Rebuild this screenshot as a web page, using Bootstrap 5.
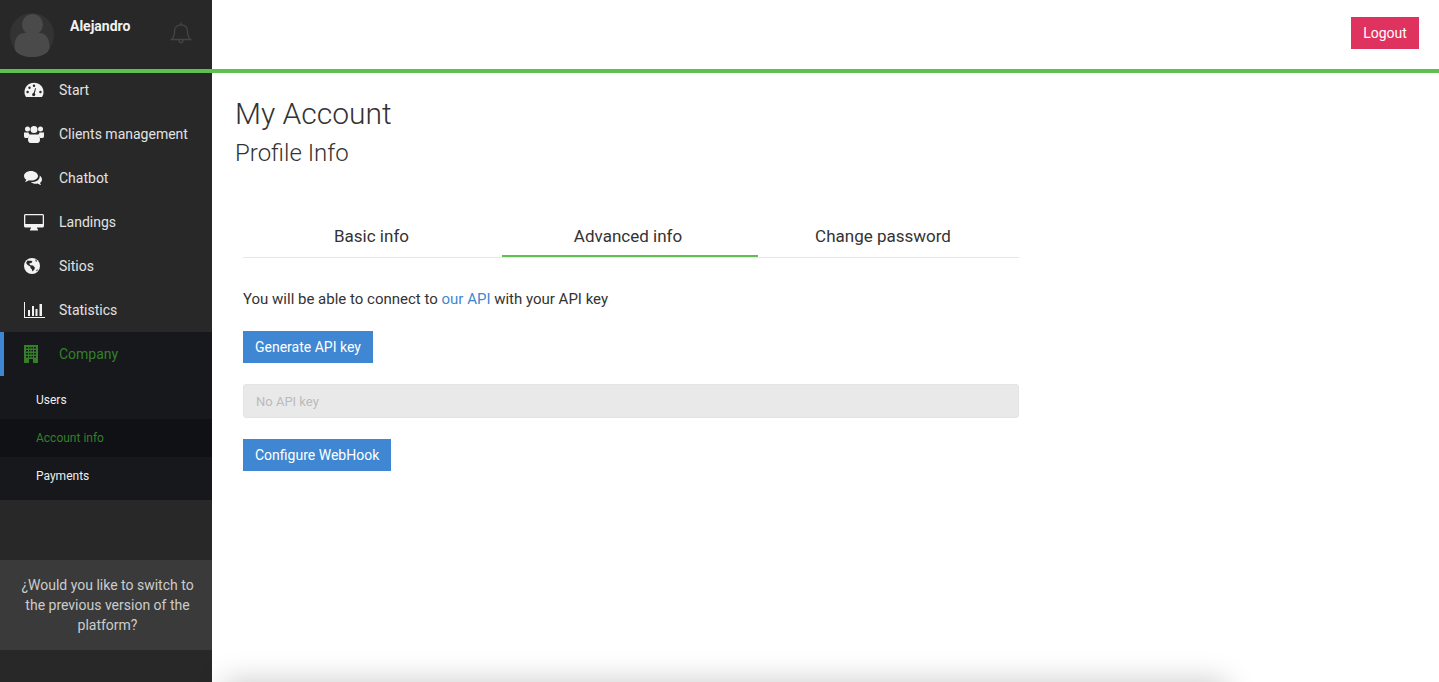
<!doctype html>
<html lang="en"><head><meta charset="utf-8"><title>My Account</title>
<link href="https://cdn.jsdelivr.net/npm/bootstrap@5.3.0/dist/css/bootstrap.min.css" rel="stylesheet">
<style>
html,body{height:100%;overflow:hidden}
body{font-family:Roboto,"Liberation Sans",sans-serif;font-size:14px;color:#333;background:#fff}
.shell{height:682px;overflow:hidden}
.side{width:212px;background:#282828;color:#eee}
.side-head{height:69px;flex:none}
.avatar{position:absolute;left:10px;top:13px}
.uname{font-size:14px;font-weight:700;color:#f2f2f2;position:absolute;left:70px;top:16px}
.bell{position:absolute;left:170px;top:21px}
.accent{height:4px;background:#60bf51;flex:none}
.menu-item{height:44px;display:flex;align-items:center;color:#e2e2e2;text-decoration:none;font-size:14px}
.menu-ico{width:59px;flex:none;padding-left:24px;display:flex}
.menu-first{margin-top:-5px}
.menu-on{background:#16181c;color:#357f2b;border-left:4px solid #3f87d2}
.menu-on .menu-ico{width:55px;padding-left:20px}
.sub-box{background:#16181c;padding-top:5px;padding-bottom:5px}
.sub-item{height:38px;display:flex;align-items:center;padding-left:36px;font-size:12px;color:#eee;text-decoration:none}
.sub-on{background:#0f1114;color:#357f2b}
.switch-box{background:#3a3a3a;color:#ccc;height:90px;margin-top:60px;font-size:14px;line-height:20px;padding:15px 16px 15px 19px;text-align:center}
.main-col{min-width:0;position:relative}
.top-bar{height:69px;flex:none;padding-top:17px}
.logout{background:#df325f;color:#fff;border-radius:0;font-size:14px;width:68px;height:32px;padding:0;border:0}
.logout:hover{background:#df325f;color:#fff}
.content{padding:23px 23px 0}
.title{font-size:30px;font-weight:300;line-height:36px;margin:0 0 3px;color:#333}
.subtitle{font-size:24px;font-weight:300;line-height:36px;margin:0;color:#333}
.pane{width:776px;margin:39px 0 0 8px}
.tabs-row{border-bottom:1px solid #e7e7e7;display:flex}
.tab-link{height:47px;padding-top:9px;display:flex;align-items:center;justify-content:center;font-size:17px;color:#333;text-decoration:none;flex:none;border-bottom:2px solid transparent}
.tab-link:nth-child(1){width:259px;padding-right:2px}
.tab-link:nth-child(2){width:256px;padding-right:4px}
.tab-link:nth-child(3){width:261px;padding-right:11px}
.tab-on{border-bottom-color:#60bf51}
.lead-text{margin:31px 0 22px;line-height:20px;font-size:15px;color:#333}
.lead-text a{color:#3f87d2;text-decoration:none}
.act{background:#3f87d2;color:#fff;border:0;border-radius:0;font-size:14px;height:32px;padding:0 12px;display:block}
.act:hover{background:#3f87d2;color:#fff}
.key-field{background:#e9e9e9;border:1px solid #e4e4e4;border-radius:3px;height:34px;font-size:13px;color:#bbb;padding:0 12px;margin:21px 0}
.key-field::placeholder{color:#bbb}
.key-field:disabled{background:#e9e9e9}
.foot-shadow{position:absolute;left:12px;width:1002px;top:682px;height:60px;background:#fff;box-shadow:0 0 30px rgba(0,0,0,.22)}
</style></head>
<body>
<div class="shell d-flex flex-column position-relative">
 <div class="d-flex flex-grow-1" style="min-height:0">
  <aside class="side d-flex flex-column flex-none position-relative">
   <div class="side-head position-relative">
    <svg class="avatar" width="44" height="44" viewBox="0 0 44 44"><circle cx="22" cy="22" r="22" fill="#333"/><circle cx="22.500" cy="11.500" r="10.500" fill="#4a4a4a"/><path d="M4.500 34c0-9 4-14 10-14h15c6 0 10 5 10 14 0 4-3 7-8 8.500-3 1-6 1.500-9.500 1.500s-6.500-.5-9.500-1.500C7.500 41 4.500 38 4.500 34z" fill="#4a4a4a"/></svg>
    <span class="uname">Alejandro</span>
    <svg class="bell" width="22" height="24" viewBox="0 0 22 24" fill="none" stroke="#444" stroke-width="1.300"><path d="M1.500 18.500c2-2 3-4 3-8 0-4 2.500-6.500 6.500-6.500s6.500 2.500 6.500 6.500c0 4 1 6 3 8z"/><path d="M11 1.200v2.800M9 19c0 1.800 1 2.800 2 2.800s2-1 2-2.800" /></svg>
   </div>
   <div class="accent"></div>
   <nav class="d-flex flex-column">
    <a class="menu-item menu-first" href="#"><span class="menu-ico"><svg width="20" height="16" viewBox="0 0 20 16"><path fill="#f2f2f2" d="M10 .8C4.500.8.500 5 .500 10c0 2 .5 3.500 1.500 5h16c1-1.500 1.500-3 1.500-5C19.500 5 15.500.8 10 .8z"/><g fill="#282828"><circle cx="3.600" cy="10" r="1.200"/><circle cx="5.500" cy="5.700" r="1.200"/><circle cx="10" cy="3.700" r="1.200"/><circle cx="16.400" cy="10" r="1.200"/><circle cx="9.700" cy="12.600" r="1.600"/><path d="M11.300 6l.7.200-1.500 6.500-1.400-.4z"/></g></svg></span>Start</a>
    <a class="menu-item" href="#"><span class="menu-ico"><svg width="20" height="18" viewBox="0 0 20 18" fill="#f2f2f2"><circle cx="3.500" cy="4" r="2.500"/><circle cx="16.500" cy="4" r="2.500"/><circle cx="10" cy="4.500" r="3.500"/><path d="M0 7.500h4.500c.5 1.500 1 2 2 2.500-1 .5-2 1.500-2.500 3H1.500C.5 13 0 12 0 11zM20 7.500h-4.500c-.5 1.500-1 2-2 2.500 1 .5 2 1.500 2.500 3h2.500c1 0 1.500-1 1.500-2z"/><path d="M6.500 9.500h7c2 .5 2.500 3 2.500 5.500 0 1.500-1 3-2.500 3h-7C5 18 4 16.500 4 15c0-2.500.5-5 2.500-5.500z"/></svg></span>Clients management</a>
    <a class="menu-item" href="#"><span class="menu-ico"><svg width="18" height="16" viewBox="0 0 18 16" fill="#f2f2f2"><path d="M7 1C3 1 0 3.300 0 6c0 1.500 1 3 2.300 3.800-.2.800-.8 1.500-1.300 2 1.500 0 3-.7 4-1.500.6.100 1.300.200 2 .200 4 0 7-2 7-4.500S11 1 7 1z"/><path d="M15.500 5.500c.2.500.3 1 .2 1.500-.3 3-3.700 5-8 5h-.9c1.200 1.200 3 1.800 5 1.800.6 0 1.200 0 1.800-.2 1 .8 2.300 1.300 3.600 1.400-.5-.5-1-1.200-1.200-2C17.200 12 18 11 18 9.500c0-1.600-1-3-2.500-4z"/></svg></span>Chatbot</a>
    <a class="menu-item" href="#"><span class="menu-ico"><svg width="20" height="17" viewBox="0 0 20 17"><path fill="#f2f2f2" fill-rule="evenodd" d="M1.500 0h17C19.300 0 20 .7 20 1.500v10.500c0 .8-.7 1.500-1.500 1.500H13c0 1 .5 1.500 1 2v1H6v-1c.5-.5 1-1 1-2H1.500C.7 13.500 0 12.800 0 12V1.500C0 .7.700 0 1.500 0zM1.300 1.300v8.700h17.400V1.300z"/></svg></span>Landings</a>
    <a class="menu-item" href="#"><span class="menu-ico"><svg width="16" height="16" viewBox="0 0 16 16"><circle cx="8" cy="8" r="8" fill="#f2f2f2"/><path fill="#282828" d="M3.500 2.500c1.500.2 2.500.5 3.800.2l1.200 1-1.500 1.500-1-.3-.7 1.100 1.200 1.200 2.500.3 2 2.300-.8 2-1.700 1.700-.7-2.200-1.300-1.300-.2-1.500-2.700-1.500-1.500-2z"/><path fill="#282828" d="M11 1.500l1.200.4 1 1.300-1.200.5zM13 11.500l1 .3-1.200 1.500-.6-.5z"/></svg></span>Sitios</a>
    <a class="menu-item" href="#"><span class="menu-ico"><svg width="21" height="16" viewBox="0 0 21 16" fill="#f2f2f2"><path d="M0 0h1v15h20v1H0z"/><path d="M4 8h2v6H4zM8 4h2v10H8zM11.500 7h2v7h-2zM15.500 2h2.500v12h-2.500z"/></svg></span>Statistics</a>
    <a class="menu-item menu-on" href="#"><span class="menu-ico"><svg width="14" height="18" viewBox="0 0 14 18"><path fill="#357f2b" fill-rule="evenodd" d="M0 0h14v18H0zM2 2v1.500h2V2zM5 2v1.500h1.500V2zM7.500 2v1.500H9V2zM10 2v1.500h2V2zM2 5v1.500h2V5zM5 5v1.500h1.500V5zM7.500 5v1.500H9V5zM10 5v1.500h2V5zM2 8v1.500h2V8zM5 8v1.500h1.500V8zM7.500 8v1.500H9V8zM10 8v1.500h2V8zM2 11v1.500h2V11zM5 11v1.500h1.500V11zM7.500 11v1.500H9V11zM10 11v1.500h2V11zM5 14v4h4v-4z"/></svg></span>Company</a>
    <div class="sub-box d-flex flex-column">
     <a class="sub-item" href="#">Users</a>
     <a class="sub-item sub-on" href="#">Account info</a>
     <a class="sub-item" href="#">Payments</a>
    </div>
   </nav>
   <div class="switch-box">¿Would you like to switch to the previous version of the platform?</div>
  </aside>
  <main class="main-col flex-grow-1 d-flex flex-column">
   <div class="top-bar d-flex justify-content-end align-items-start pe-3"><button class="btn logout me-1" type="button">Logout</button></div>
   <div class="accent"></div>
   <div class="content">
    <h1 class="title">My Account</h1>
    <h2 class="subtitle">Profile Info</h2>
    <div class="pane">
     <div class="tabs-row">
      <a class="tab-link" href="#">Basic info</a>
      <a class="tab-link tab-on" href="#">Advanced info</a>
      <a class="tab-link" href="#">Change password</a>
     </div>
     <p class="lead-text">You will be able to connect to <a href="#">our API</a> with your API key</p>
     <button class="btn act" type="button">Generate API key</button>
     <input class="form-control key-field" type="text" placeholder="No API key" disabled>
     <button class="btn act" type="button">Configure WebHook</button>
    </div>
   </div>
   <div class="foot-shadow"></div>
  </main>
 </div>
</div>
<script src="https://cdn.jsdelivr.net/npm/bootstrap@5.3.0/dist/js/bootstrap.bundle.min.js"></script>
</body></html>
